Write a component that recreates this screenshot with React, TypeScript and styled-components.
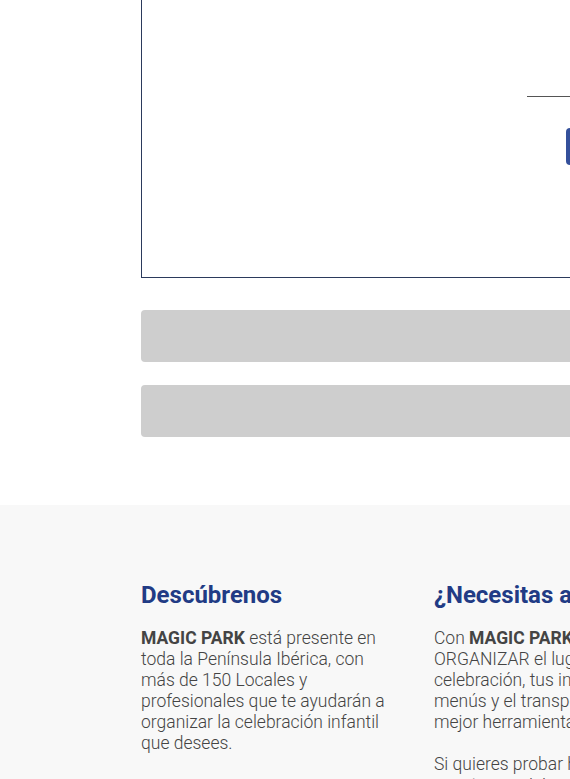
import React from "react";
import styled, { createGlobalStyle } from "styled-components";

const Global = createGlobalStyle`
  html, body { margin: 0; padding: 0; overflow-x: hidden; background: #ffffff; }
  body { font-family: Roboto, "Helvetica Neue", Arial, sans-serif; }
`;

const Page = styled.div`
  width: 1200px;
`;

const Top = styled.section`
  background: #ffffff;
  padding: 0 0 68px 141px;
`;

const Container = styled.div`
  width: 960px;
  display: flex;
  flex-direction: column;
`;

const FormBox = styled.div`
  height: 278px;
  box-sizing: border-box;
  border: 1px solid #2b3a5c;
  border-top: 0;
  padding: 96px 0 0 385px;
  display: flex;
  flex-direction: column;
  align-items: flex-start;
`;

const Underline = styled.div`
  width: 320px;
  height: 1px;
  background: #555555;
`;

const SubmitButton = styled.button`
  margin: 31px 0 0 39px;
  width: 140px;
  height: 37px;
  border: 0;
  border-radius: 4px;
  background: #34509b;
  color: #fff;
`;

const GrayBar = styled.div<{ $mt: number }>`
  margin-top: ${(p) => p.$mt}px;
  height: 52px;
  border-radius: 4px;
  background: #cecece;
`;

const Footer = styled.footer`
  background: #f8f8f8;
  padding: 76px 0 40px 141px;
`;

const Columns = styled.div`
  display: grid;
  grid-template-columns: 250px 250px 250px;
  column-gap: 43px;
`;

const Col = styled.div`
  display: flex;
  flex-direction: column;
`;

const Heading = styled.h3`
  margin: 0 0 19px;
  font-family: Roboto, "Helvetica Neue", Arial, sans-serif;
  font-weight: 700;
  font-size: 24px;
  line-height: 28px;
  color: #213b85;
`;

const Text = styled.p`
  margin: 0 0 21px;
  font-size: 17.5px;
  line-height: 21px;
  font-weight: 300;
  color: #444444;
  b { font-weight: 700; color: #444; }
`;

export default function App() {
  return (
    <Page>
      <Global />
      <Top>
        <Container>
          <FormBox>
            <Underline />
            <SubmitButton aria-label="Enviar" />
          </FormBox>
          <GrayBar $mt={32} />
          <GrayBar $mt={23} />
        </Container>
      </Top>
      <Footer>
        <Columns>
          <Col>
            <Heading>Descúbrenos</Heading>
            <Text>
              <b>MAGIC PARK</b> está presente en toda la Península Ibérica, con
              más de 150 Locales y profesionales que te ayudarán a organizar la
              celebración infantil que desees.
            </Text>
          </Col>
          <Col>
            <Heading>¿Necesitas ayuda?</Heading>
            <Text>
              Con <b>MAGIC PARK</b> puedes ORGANIZAR el lugar de tu celebración,
              tus invitaciones, los menús y el transporte. Somos la mejor
              herramienta para tu fiesta.
            </Text>
            <Text>Si quieres probar hoy mismo nuestro servicio, contáctanos.</Text>
          </Col>
          <Col />
        </Columns>
      </Footer>
    </Page>
  );
}
